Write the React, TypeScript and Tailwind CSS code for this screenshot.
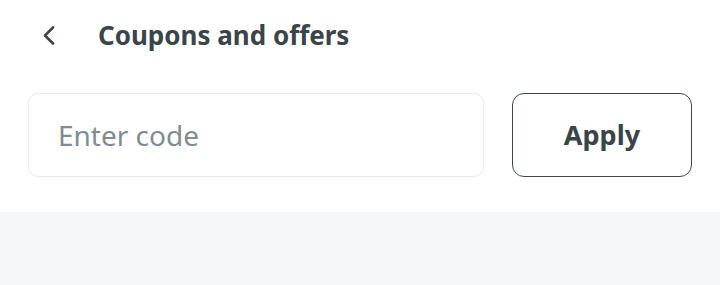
import React, { useState } from 'react';

const App: React.FC = () => {
  const [code, setCode] = useState('');

  return (
    <div className="w-[720px] h-[285px] bg-white flex flex-col" style={{ fontFamily: '"Noto Sans", sans-serif' }}>
      <div className="h-[70px] flex items-center pl-[40px] shrink-0">
        <button className="w-[16px] h-[20px] flex items-center justify-center text-[#3a4449]" aria-label="Back">
          <svg width="16" height="20" viewBox="0 0 16 20" fill="none">
            <path d="M13 2.5L5 10.5L13 18.5" stroke="currentColor" strokeWidth="2.6" strokeLinecap="round" strokeLinejoin="round" />
          </svg>
        </button>
        <h1 className="ml-[42px] text-[26px] font-bold text-[#3a4449]">Coupons and offers</h1>
      </div>

      <div className="flex gap-[28px] pl-[28px] pr-[28px] pt-[23px] pb-[35px] shrink-0">
        <input
          value={code}
          onChange={(e) => setCode(e.target.value)}
          placeholder="Enter code"
          className="w-[456px] h-[84px] border border-[#e9ebec] rounded-[10px] px-[29px] text-[28px] text-[#3a4449] placeholder:text-[#808c91] outline-none"
        />
        <button className="w-[180px] h-[84px] border border-[#3d484d] rounded-[12px] text-[27px] font-bold text-[#3a4449]">
          Apply
        </button>
      </div>

      <div className="flex-1 bg-[#f6f7f9]" />
    </div>
  );
};

export default App;
